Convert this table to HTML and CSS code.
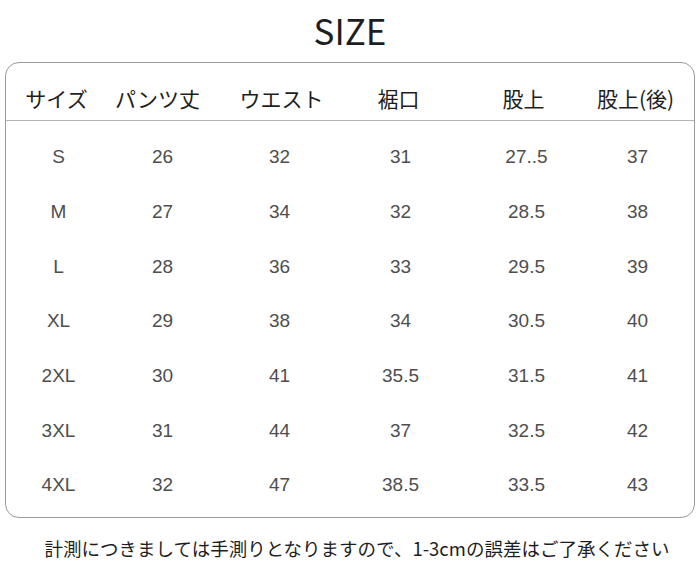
FILE: index.html
```html
<!DOCTYPE html>
<html lang="ja">
<head>
<meta charset="utf-8">
<link rel="stylesheet" href="styles.css">
</head>
<body>
<div class="page">
  <h1 class="title">SIZE</h1>
  <div class="box">
    <div class="row head">
      <div>サイズ</div><div>パンツ丈</div><div>ウエスト</div><div>裾口</div><div>股上</div><div>股上(後)</div>
    </div>
    <div class="body">
      <div class="row"><div>S</div><div>26</div><div>32</div><div>31</div><div>27..5</div><div>37</div></div>
      <div class="row"><div>M</div><div>27</div><div>34</div><div>32</div><div>28.5</div><div>38</div></div>
      <div class="row"><div>L</div><div>28</div><div>36</div><div>33</div><div>29.5</div><div>39</div></div>
      <div class="row"><div>XL</div><div>29</div><div>38</div><div>34</div><div>30.5</div><div>40</div></div>
      <div class="row"><div>2XL</div><div>30</div><div>41</div><div>35.5</div><div>31.5</div><div>41</div></div>
      <div class="row"><div>3XL</div><div>31</div><div>44</div><div>37</div><div>32.5</div><div>42</div></div>
      <div class="row"><div>4XL</div><div>32</div><div>47</div><div>38.5</div><div>33.5</div><div>43</div></div>
    </div>
  </div>
  <p class="note">計測につきましては手測りとなりますので、1-3cmの誤差はご了承ください</p>
</div>
</body>
</html>
```
FILE: styles.css
```css
html, body {
  margin: 0;
  padding: 0;
  background: #fff;
}
.page {
  width: 700px;
  height: 567px;
  padding: 0 5px;
  box-sizing: border-box;
  display: flex;
  flex-direction: column;
  align-items: stretch;
}
.title {
  margin: 0;
  height: 62px;
  line-height: 60px;
  text-align: center;
  font-family: "Noto Sans CJK JP", "Noto Sans", sans-serif;
  font-weight: 400;
  font-size: 35px;
  color: #1e1e1e;
}
.box {
  border: 1.5px solid #9a9a9a;
  border-radius: 14px;
  box-sizing: border-box;
  height: 456px;
}
.row {
  display: grid;
  grid-template-columns: 105px 103px 131px 111px 141px 81px;
  align-items: center;
}
.row > div {
  display: flex;
  justify-content: center;
  white-space: nowrap;
}
.head {
  grid-template-columns: 101px 101px 147px 87px 163px 61px;
  height: 58px;
  padding-top: 13px;
  box-sizing: border-box;
  line-height: 36px;
  border-bottom: 1.5px solid #b4b4b4;
  font-family: "Noto Sans CJK JP", sans-serif;
  font-size: 21px;
  color: #1e1e1e;
}
.body {
  padding-top: 9px;
}
.body .row {
  height: 54.7px;
  font-family: "Liberation Sans", Arial, sans-serif;
  font-size: 19px;
  color: #4e4e4e;
}
.note {
  margin: 0;
  flex: 1;
  display: flex;
  align-items: center;
  justify-content: center;
  font-family: "Noto Sans CJK JP", sans-serif;
  font-size: 18.5px;
  color: #1e1e1e;
  padding-top: 10px;
  padding-left: 14px;
}
```
